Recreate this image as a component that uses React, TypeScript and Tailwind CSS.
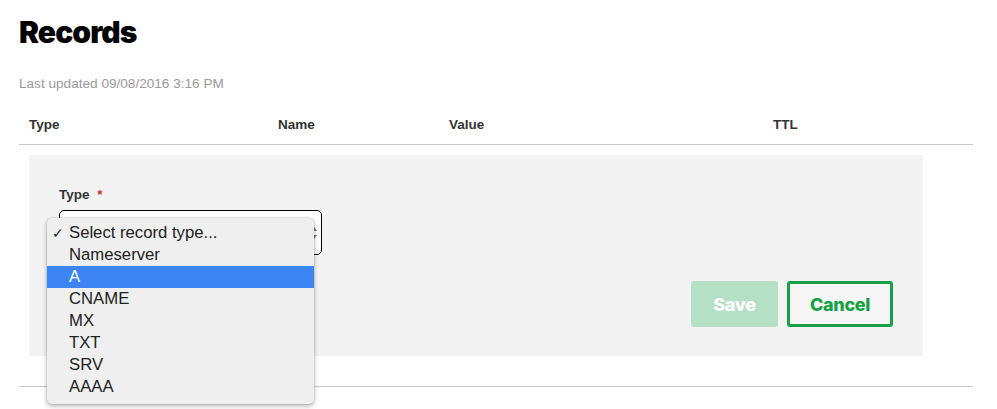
import React from "react";

const options = ["Select record type...", "Nameserver", "A", "CNAME", "MX", "TXT", "SRV", "AAAA"];

export default function App() {
  return (
    <div className="min-h-[409px] bg-white pl-[19px] pr-[24px] pt-[14px]" style={{ fontFamily: '"Liberation Sans", Arial, sans-serif' }}>
      <h1 className="text-[30px] leading-[36px] font-black tracking-[-0.9px] text-black" style={{ fontFamily: 'Inter, "Liberation Sans", sans-serif' }}>
        Records
      </h1>
      <div className="mt-[26px] text-[13.6px] leading-[16px] text-[#9a9a9a]">Last updated 09/08/2016 3:16 PM</div>
      <div className="mt-[25px] grid grid-cols-[249px_171px_324px_1fr] pl-[10px] pb-[11px] border-b border-[#c9c9c9] text-[13.5px] leading-[16px] font-bold text-[#333]">
        <div>Type</div>
        <div>Name</div>
        <div>Value</div>
        <div>TTL</div>
      </div>
      <div className="ml-[10px] mt-[10px] w-[894px] h-[201px] bg-[#f3f3f4] px-[30px] pt-[32px] flex flex-col">
        <div className="text-[13.5px] leading-[16px] font-bold text-[#333]">
          Type <span className="ml-[4px] text-[#d0312d]">*</span>
        </div>
        <div className="relative mt-[7px] w-[263px] h-[45px] rounded-[5px] border border-black bg-white">
          <svg className="absolute right-[3px] top-[14px]" width="8" height="16" viewBox="0 0 8 16">
            <path d="M1 6 L4 2 L7 6 Z" fill="#777" />
            <path d="M1 10 L4 14 L7 10 Z" fill="#777" />
          </svg>
          <div className="absolute left-[-13px] top-[7px] w-[267px] rounded-[5px] bg-[#efefef] pt-[4px] pb-[6px] shadow-[0_2px_5px_rgba(0,0,0,0.3),0_0_0_0.5px_rgba(0,0,0,0.12)] z-10">
            {options.map((o, i) => (
              <div
                key={o}
                className={
                  i === 2
                    ? "relative h-[22px] pl-[22px] text-[16.7px] leading-[22px] bg-[#3d85f2] text-white"
                    : "relative h-[22px] pl-[22px] text-[16.7px] leading-[22px] text-[#222]"
                }
              >
                {i === 0 && <span className="absolute left-[5px] top-0 text-[14px] leading-[22px] text-[#222]">✓</span>}
                {o}
              </div>
            ))}
          </div>
        </div>
        <div className="mt-[26px] flex justify-end gap-[9px]" style={{ fontFamily: 'Inter, "Liberation Sans", sans-serif' }}>
          <button className="w-[87px] h-[46px] rounded-[3px] bg-[#b5e0c6] text-white text-[18px] font-extrabold tracking-[-0.3px]">Save</button>
          <button className="w-[106px] h-[46px] rounded-[3px] border-[3px] border-[#16a046] bg-[#f6f6f6] text-[#16a046] text-[18px] font-extrabold tracking-[-0.3px]">Cancel</button>
        </div>
      </div>
      <div className="mt-[30px] border-b border-[#c9c9c9]" />
    </div>
  );
}
